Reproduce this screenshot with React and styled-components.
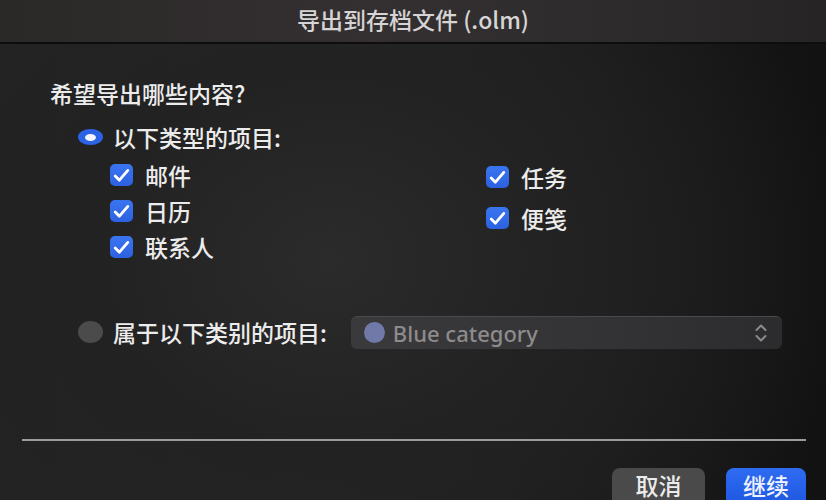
import React from 'react';
import styled, { createGlobalStyle } from 'styled-components';

const GlobalStyle = createGlobalStyle`
  html, body { margin: 0; padding: 0; background: #161616; }
  body { font-family: "Noto Sans CJK SC", "Noto Sans", sans-serif; }
`;

const Window = styled.div`
  width: 826px;
  height: 500px;
  overflow: hidden;
  display: flex;
  flex-direction: column;
  color: #ececec;
  font-weight: 500;
  background:
    radial-gradient(ellipse 520px 420px at 330px 260px, #2b2b2b 0%, #222 45%, rgba(20,20,20,0) 100%),
    linear-gradient(90deg, #232323 0%, #262626 40%, #171717 80%, #121213 100%);
`;

const TitleBar = styled.div`
  height: 44px;
  flex-shrink: 0;
  display: flex;
  align-items: center;
  justify-content: center;
  padding-bottom: 5px;
  box-sizing: border-box;
  font-size: 23px;
  color: #d6d4d4;
  background: linear-gradient(90deg, #2b2828 0%, #343031 45%, #2e2b2c 75%, #262424 100%);
  border-bottom: 2px solid #0d0d0d;
`;

const Body = styled.div`
  display: flex;
  flex-direction: column;
  padding: 34px 20px 0 50px;
`;

const Question = styled.div`
  height: 30px;
  line-height: 30px;
  font-size: 23px;
`;

const OptionRow = styled.div`
  display: flex;
  align-items: center;
  height: 30px;
  margin-top: ${p => p.$top}px;
  margin-left: 28px;
  font-size: 23px;
`;

const Radio = styled.span`
  width: 25px;
  height: ${p => (p.$on ? 16 : 22)}px;
  border-radius: 50%;
  background: ${p => (p.$on ? '#2c63e4' : '#4b4b4b')};
  display: flex;
  align-items: center;
  justify-content: center;
  margin-right: 10px;
  flex-shrink: 0;
  &::after {
    content: '';
    display: ${p => (p.$on ? 'block' : 'none')};
    width: 11px;
    height: 7px;
    border-radius: 50%;
    background: #f4f6ff;
  }
`;

const Columns = styled.div`
  display: grid;
  grid-template-columns: 376px 1fr;
  margin-left: 60px;
  margin-top: 8px;
`;

const CheckList = styled.div`
  display: flex;
  flex-direction: column;
  gap: ${p => p.$gap}px;
  padding-top: ${p => p.$offset}px;
`;

const CheckRow = styled.label`
  display: flex;
  align-items: center;
  height: 30px;
  font-size: 23px;
`;

const Box = styled.span`
  width: 23px;
  height: 22px;
  border-radius: 5px;
  background: linear-gradient(#3a75f0, #2c61e0);
  display: flex;
  align-items: center;
  justify-content: center;
  margin-right: 12px;
  flex-shrink: 0;
`;

const Select = styled.div`
  margin-left: 24px;
  width: 431px;
  height: 33px;
  border-radius: 6px;
  background: linear-gradient(90deg, #3a393b 0%, #333234 60%, #2c2c2e 100%);
  border-top: 1px solid #4a494b;
  box-sizing: border-box;
  display: flex;
  align-items: center;
  padding: 0 14px 0 13px;
  color: #8d8b8c;
  font-family: "Noto Sans", "Noto Sans CJK SC", sans-serif;
  font-size: 22px;
  font-weight: 500;
`;

const Dot = styled.span`
  width: 21px;
  height: 21px;
  border-radius: 50%;
  background: #7179a8;
  margin-right: 8px;
`;

const SelectText = styled.span`
  flex: 1;
`;

const Divider = styled.div`
  height: 2px;
  background: #9c9c9c;
  margin: 0 20px 0 22px;
  margin-top: auto;
`;

const Footer = styled.div`
  display: flex;
  justify-content: flex-end;
  gap: 21px;
  padding: 27px 20px 0 0;
  height: 32px;
`;

const Button = styled.button`
  width: ${p => p.$w}px;
  height: 40px;
  border: none;
  border-radius: 8px;
  background: ${p => (p.$primary ? 'linear-gradient(#2f6cf2, #1d55df)' : '#4a4a4a')};
  color: ${p => (p.$primary ? '#eef3ff' : '#ececec')};
  font-family: "Noto Sans CJK SC", sans-serif;
  font-size: 23px;
  font-weight: 500;
  padding: 0;
  padding-bottom: 8px;
`;

const Check = () => (
  <svg width="17" height="15" viewBox="0 0 17 15">
    <path d="M2.2 8 L6.4 12.2 L14.8 2.4" fill="none" stroke="#fff" strokeWidth="2.8" strokeLinecap="round" strokeLinejoin="round" />
  </svg>
);

const Item = ({ children }) => (
  <CheckRow>
    <Box><Check /></Box>
    {children}
  </CheckRow>
);

export default function App() {
  return (
    <Window>
      <GlobalStyle />
      <TitleBar>导出到存档文件 (.olm)</TitleBar>
      <Body>
        <Question>希望导出哪些内容?</Question>
        <OptionRow $top={14}>
          <Radio $on />
          以下类型的项目:
        </OptionRow>
        <Columns>
          <CheckList $gap={6} $offset={0}>
            <Item>邮件</Item>
            <Item>日历</Item>
            <Item>联系人</Item>
          </CheckList>
          <CheckList $gap={11} $offset={2}>
            <Item>任务</Item>
            <Item>便笺</Item>
          </CheckList>
        </Columns>
        <OptionRow $top={55}>
          <Radio />
          属于以下类别的项目:
          <Select>
            <Dot />
            <SelectText>Blue category</SelectText>
            <svg width="14" height="22" viewBox="0 0 14 22">
              <path d="M2.5 8 L7 3.5 L11.5 8 M2.5 14 L7 18.5 L11.5 14" fill="none" stroke="#8a8a8a" strokeWidth="2" strokeLinecap="round" strokeLinejoin="round" />
            </svg>
          </Select>
        </OptionRow>
      </Body>
      <Divider />
      <Footer>
        <Button $w={93}>取消</Button>
        <Button $w={80} $primary>继续</Button>
      </Footer>
    </Window>
  );
}
